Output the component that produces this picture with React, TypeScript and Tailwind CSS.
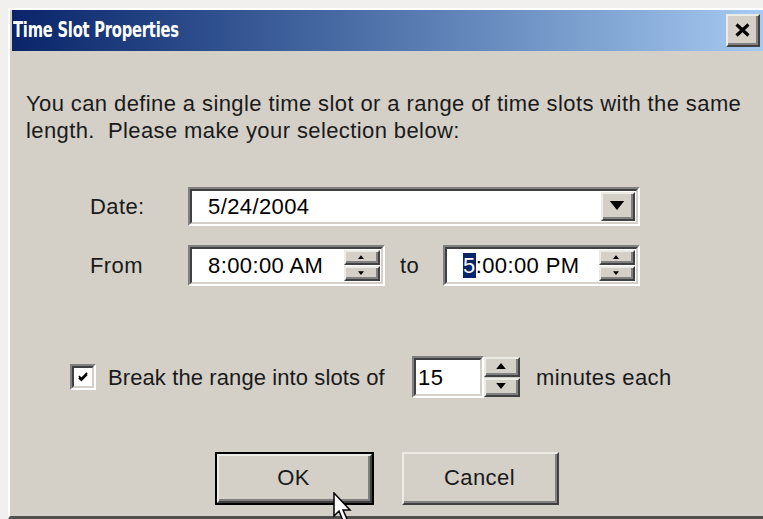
import React from 'react';

const Sunken: React.FC<{ className?: string; children?: React.ReactNode }> = ({ className = '', children }) => (
  <div className={`border-2 border-t-[#808080] border-l-[#808080] border-b-white border-r-white ${className}`}>
    <div className="h-full w-full border-2 border-t-[#404040] border-l-[#404040] border-b-[#d4d0c8] border-r-[#d4d0c8] bg-white flex items-center">
      {children}
    </div>
  </div>
);

const Raised: React.FC<{ className?: string; children?: React.ReactNode }> = ({ className = '', children }) => (
  <div className={`border-2 border-t-[#ecebe6] border-l-[#ecebe6] border-b-[#404040] border-r-[#404040] bg-[#d4d0c8] ${className}`}>
    <div className="h-full w-full border-b-2 border-r-2 border-b-[#808080] border-r-[#808080] flex items-center justify-center">
      {children}
    </div>
  </div>
);

const Arrow: React.FC<{ up?: boolean; size?: number }> = ({ up, size = 8 }) => (
  <svg width={size} height={size / 2 + 1} viewBox="0 0 8 5">
    {up ? <polygon points="4,0 8,5 0,5" fill="#000" /> : <polygon points="0,0 8,0 4,5" fill="#000" />}
  </svg>
);

const Spinner: React.FC<{ small?: boolean }> = ({ small }) => (
  <div className="flex flex-col gap-[1px] h-full w-[36px]">
    <Raised className="flex-1"><Arrow up size={small ? 6 : 10} /></Raised>
    <Raised className="flex-1"><Arrow size={small ? 6 : 10} /></Raised>
  </div>
);

const TimeField: React.FC<{ value: React.ReactNode }> = ({ value }) => (
  <Sunken className="w-[197px] h-[41px]">
    <div className="flex-1 pl-[16px] text-black whitespace-nowrap">{value}</div>
    <div className="h-full py-[1px] pr-[1px]"><Spinner small /></div>
  </Sunken>
);

export default function App() {
  return (
    <div
      className="w-[763px] h-[519px] overflow-hidden bg-[#f1f0ee] pl-[8px] pt-[8px]"
      style={{ fontFamily: '"Liberation Sans", Arial, sans-serif' }}
    >
      <div className="w-[755px] h-[511px] bg-[#d4d0c8] border-l-2 border-t-2 border-l-white border-t-white border-b-[3px] border-b-[#505050] pl-[2px] flex flex-col">
        {/* title bar */}
        <div className="h-[41px] flex items-center justify-between bg-gradient-to-r from-[#0a246a] to-[#a6caf0] pl-[1px] pr-[3px]">
          <span
            className="inline-block origin-left scale-x-[0.7] text-white font-bold text-[21px] tracking-[-0.3px] whitespace-nowrap"
            style={{ fontFamily: '"DejaVu Sans", sans-serif' }}
          >
            Time Slot Properties
          </span>
          <Raised className="w-[34px] h-[33px]">
            <svg width="15" height="14" viewBox="0 0 15 14">
              <path d="M1.5 1.5 L13.5 12.5 M13.5 1.5 L1.5 12.5" stroke="#000" strokeWidth="3.2" />
            </svg>
          </Raised>
        </div>

        {/* body */}
        <div className="flex flex-col text-[22px] tracking-[0.4px] text-[#1a1a1a]">
          <p className="ml-[14px] mt-[39px] leading-[27px] whitespace-nowrap">
            You can define a single time slot or a range of time slots with the same
            <br />
            length.&nbsp; Please make your selection below:
          </p>

          <div className="flex items-center mt-[43px] ml-[78px]">
            <span className="w-[98px]">Date:</span>
            <Sunken className="w-[452px] h-[39px]">
              <div className="flex-1 pl-[16px] text-black">5/24/2004</div>
              <div className="h-full py-[1px] pr-[1px]">
                <Raised className="w-[34px] h-full"><Arrow size={16} /></Raised>
              </div>
            </Sunken>
          </div>

          <div className="flex items-center mt-[19px] ml-[78px]">
            <span className="w-[98px]">From</span>
            <TimeField value="8:00:00 AM" />
            <span className="ml-[15px] w-[43px]">to</span>
            <TimeField
              value={
                <span>
                  <span className="bg-[#0a246a] text-white">5</span>:00:00 PM
                </span>
              }
            />
          </div>

          <div className="flex items-center mt-[70px] ml-[58px]">
            <Sunken className="w-[26px] h-[26px]">
              <svg width="22" height="22" viewBox="0 0 22 22">
                <path d="M6 10 L9 13 L16 6 M6 12 L9 15 L16 8" stroke="#000" strokeWidth="2" fill="none" />
              </svg>
            </Sunken>
            <span className="ml-[12px] w-[304px] whitespace-nowrap tracking-[0.1px]">Break the range into slots of</span>
            <Sunken className="w-[72px] h-[42px]">
              <div className="flex-1 pl-[2px] text-black">15</div>
            </Sunken>
            <div className="h-[42px] py-[1px]"><Spinner /></div>
            <span className="ml-[16px] whitespace-nowrap">minutes each</span>
          </div>

          <div className="flex mt-[54px] ml-[203px] gap-[28px]">
            <div className="relative w-[159px] h-[53px] border-2 border-black">
              <Raised className="w-full h-full">
                <span>OK</span>
              </Raised>
              {/* mouse pointer */}
              <svg className="absolute left-[116px] top-[38px]" width="22" height="32" viewBox="0 0 22 32">
                <path d="M1 1 L1 24 L6 19 L10 29 L14 27 L10 18 L17 18 Z" fill="#fff" stroke="#000" strokeWidth="1.5" />
              </svg>
            </div>
            <Raised className="w-[157px] h-[53px]">
              <span>Cancel</span>
            </Raised>
          </div>
        </div>
      </div>
    </div>
  );
}
